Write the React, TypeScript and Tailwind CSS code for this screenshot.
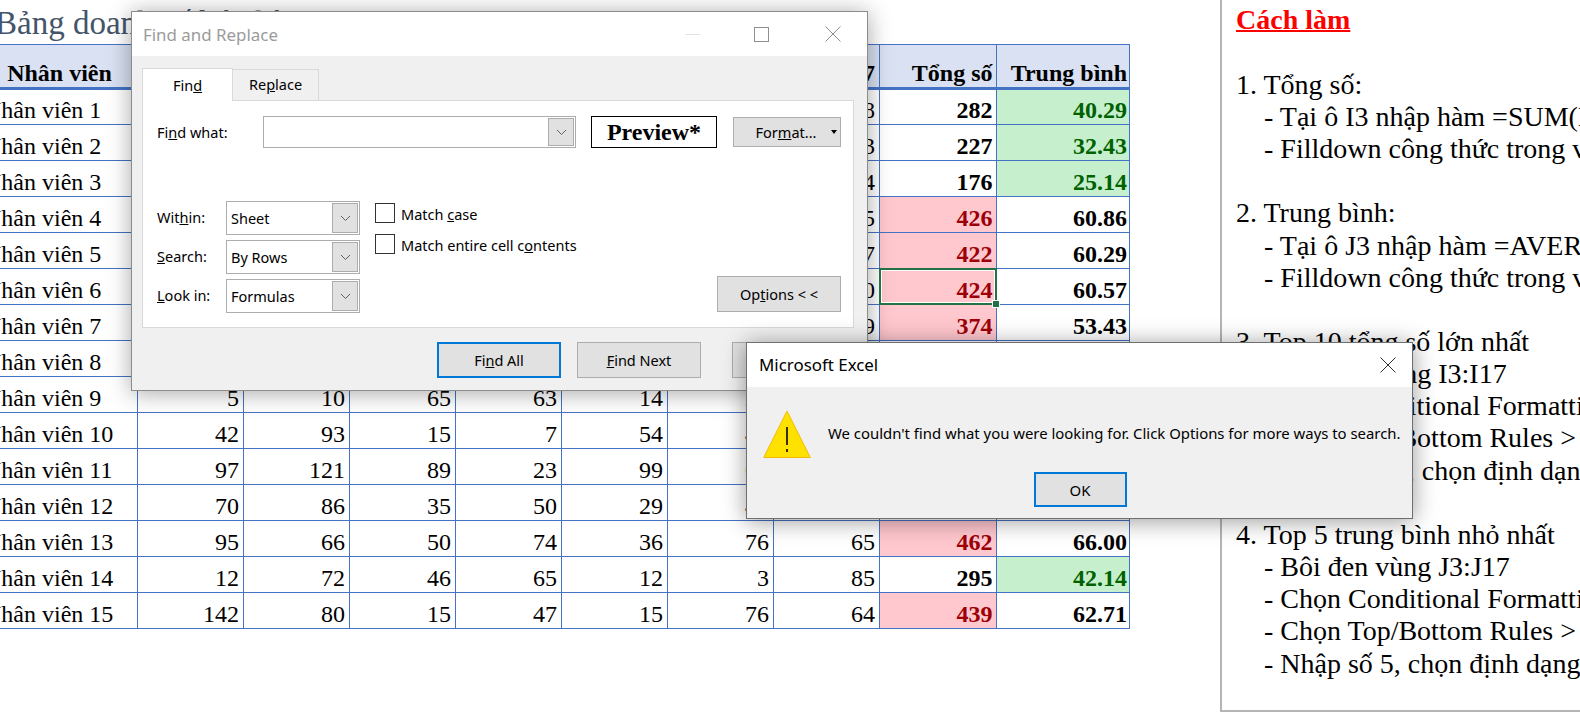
const sans = "font-['Noto_Sans',sans-serif]";

type Cell = { v: string; tone?: "red" | "green" };
const rows: { n: number; d: number[]; t: Cell; a: Cell }[] = [
  { n: 1, d: [40, 40, 40, 40, 40, 34, 48], t: { v: "282" }, a: { v: "40.29", tone: "green" } },
  { n: 2, d: [30, 30, 30, 30, 34, 40, 33], t: { v: "227" }, a: { v: "32.43", tone: "green" } },
  { n: 3, d: [20, 20, 30, 30, 30, 22, 24], t: { v: "176" }, a: { v: "25.14", tone: "green" } },
  { n: 4, d: [60, 60, 60, 60, 60, 61, 65], t: { v: "426", tone: "red" }, a: { v: "60.86" } },
  { n: 5, d: [60, 60, 60, 60, 60, 65, 57], t: { v: "422", tone: "red" }, a: { v: "60.29" } },
  { n: 6, d: [60, 60, 60, 60, 60, 64, 60], t: { v: "424", tone: "red" }, a: { v: "60.57" } },
  { n: 7, d: [50, 50, 50, 50, 50, 55, 69], t: { v: "374", tone: "red" }, a: { v: "53.43" } },
  { n: 8, d: [40, 40, 40, 40, 40, 40, 40], t: { v: "280" }, a: { v: "40.00" } },
  { n: 9, d: [5, 10, 65, 63, 14, 20, 30], t: { v: "207" }, a: { v: "29.57" } },
  { n: 10, d: [42, 93, 15, 7, 54, 40, 50], t: { v: "301" }, a: { v: "43.00" } },
  { n: 11, d: [97, 121, 89, 23, 99, 60, 70], t: { v: "559" }, a: { v: "79.86" } },
  { n: 12, d: [70, 86, 35, 50, 29, 40, 40], t: { v: "350" }, a: { v: "50.00" } },
  { n: 13, d: [95, 66, 50, 74, 36, 76, 65], t: { v: "462", tone: "red" }, a: { v: "66.00" } },
  { n: 14, d: [12, 72, 46, 65, 12, 3, 85], t: { v: "295" }, a: { v: "42.14", tone: "green" } },
  { n: 15, d: [142, 80, 15, 47, 15, 76, 64], t: { v: "439", tone: "red" }, a: { v: "62.71" } },
];

const toneClass = (tone?: "red" | "green") =>
  tone === "red"
    ? "bg-[#ffc7ce] text-[#9c0006]"
    : tone === "green"
      ? "bg-[#c6efce] text-[#006100]"
      : "bg-white text-black";

function Sheet() {
  return (
    <div className="w-[1129px] shrink-0 font-['Liberation_Serif',serif] text-black">
      <div className="h-[44px] -ml-[5px] whitespace-nowrap text-[33px] leading-[46px] text-[#44546a]">
        Bảng doanh số bán hàng
      </div>
      <table className="-ml-[19px] w-[1148.5px] table-fixed border-collapse text-[24px]">
        <colgroup>
          <col className="w-[156px]" />
          {[0, 1, 2, 3, 4, 5, 6].map((i) => (
            <col key={i} className="w-[106px]" />
          ))}
          <col className="w-[116.5px]" />
          <col className="w-[133.5px]" />
        </colgroup>
        <thead>
          <tr className="h-[44px] bg-[#d9e1f2] font-bold">
            <th className="border border-b-[3px] border-[#4472c4] text-center align-bottom leading-[28px]">Nhân viên</th>
            {[1, 2, 3, 4, 5, 6, 7].map((i) => (
              <th key={i} className="border border-b-[3px] border-[#4472c4] px-[4px] text-right align-bottom leading-[28px]">
                Ngày {i}
              </th>
            ))}
            <th className="border border-b-[3px] border-[#4472c4] pl-[4px] pr-[3px] text-right align-bottom leading-[28px]">Tổng số</th>
            <th className="border border-b-[3px] border-[#4472c4] pl-[4px] pr-[2px] text-right align-bottom leading-[28px]">Trung bình</th>
          </tr>
        </thead>
        <tbody>
          {rows.map((r) => (
            <tr key={r.n} className="h-[36px]">
              <td className="whitespace-nowrap border border-[#4472c4] px-[2px] align-bottom leading-[28px]">Nhân viên {r.n}</td>
              {r.d.map((v, i) => (
                <td key={i} className="border border-[#4472c4] px-[4px] text-right align-bottom leading-[28px]">
                  {v}
                </td>
              ))}
              <td className={`relative border border-[#4472c4] pl-[4px] pr-[3px] text-right align-bottom font-bold leading-[28px] ${toneClass(r.t.tone)}`}>
                {r.t.v}
                {r.n === 6 && (
                  <>
                    <span className="absolute -inset-[1px] z-10 border-2 border-[#217346] shadow-[inset_0_0_0_1px_#ffffff]" />
                    <span className="absolute -bottom-[4px] -right-[4px] z-10 h-[8px] w-[8px] border border-white bg-[#217346]" />
                  </>
                )}
              </td>
              <td className={`border border-[#4472c4] pl-[4px] pr-[2px] text-right align-bottom font-bold leading-[28px] ${toneClass(r.a.tone)}`}>
                {r.a.v}
              </td>
            </tr>
          ))}
        </tbody>
      </table>
    </div>
  );
}

const notes: { text: string; indent?: boolean }[] = [
  { text: "1. Tổng số:" },
  { text: "- Tại ô I3 nhập hàm =SUM(D3:H3)", indent: true },
  { text: "- Filldown công thức trong vùng I3:I17", indent: true },
  { text: "\u00a0" },
  { text: "2. Trung bình:" },
  { text: "- Tại ô J3 nhập hàm =AVERAGE(D3:H3)", indent: true },
  { text: "- Filldown công thức trong vùng J3:J17", indent: true },
  { text: "\u00a0" },
  { text: "3. Top 10 tổng số lớn nhất" },
  { text: "- Bôi đen vùng I3:I17", indent: true },
  { text: "- Chọn Conditional Formatting", indent: true },
  { text: "- Chọn Top/Bottom Rules > Top 10", indent: true },
  { text: "- Nhập số 10, chọn định dạng", indent: true },
  { text: "\u00a0" },
  { text: "4. Top 5 trung bình nhỏ nhất" },
  { text: "- Bôi đen vùng J3:J17", indent: true },
  { text: "- Chọn Conditional Formatting", indent: true },
  { text: "- Chọn Top/Bottom Rules > Bottom", indent: true },
  { text: "- Nhập số 5, chọn định dạng", indent: true },
];

function Notes() {
  return (
    <div className="ml-[91px] h-[712px] w-[400px] shrink-0 border-b-[2px] border-l-[2px] border-[#b5b5b5] pl-[14px] font-['Liberation_Serif',serif] text-[28px] leading-[32.15px] text-black whitespace-nowrap">
      <div className="pt-[4px] font-bold text-[#ff0000] underline decoration-[2px]">Cách làm</div>
      <div className="h-[32.6px]" />
      {notes.map((l, i) => (
        <div key={i} className={l.indent ? "pl-[28px]" : ""}>
          {l.text}
        </div>
      ))}
    </div>
  );
}

function Chevron() {
  return (
    <span className="flex h-full w-[26px] shrink-0 items-center justify-center border border-[#adadad] bg-[#e1e1e1]">
      <svg width="11" height="7" viewBox="0 0 11 7" fill="none" stroke="#606060" strokeWidth="1">
        <path d="M1 1l4.5 4.5L10 1" />
      </svg>
    </span>
  );
}

function Combo({ label, value }: { label: React.ReactNode; value: string }) {
  return (
    <div className="flex items-center">
      <div className="w-[69px] shrink-0">{label}</div>
      <div className="flex h-[34px] w-[134px] items-center border border-[#adadad] bg-white p-[1px] pl-[4px]">
        <span className="grow pt-[1px]">{value}</span>
        <Chevron />
      </div>
    </div>
  );
}

function Btn({ children, focus, className }: { children: React.ReactNode; focus?: boolean; className: string }) {
  return (
    <div
      className={`flex items-center justify-center bg-[#e1e1e1] pt-[1px] ${
        focus ? "border-2 border-[#0078d7]" : "border border-[#adadad]"
      } ${className}`}
    >
      <span>{children}</span>
    </div>
  );
}

function Check({ children }: { children: React.ReactNode }) {
  return (
    <div className="flex items-center gap-[6px]">
      <span className="h-[20px] w-[20px] border border-[#333333] bg-white" />
      <span className="pt-[2px] leading-[20px]">{children}</span>
    </div>
  );
}

function U({ children }: { children: React.ReactNode }) {
  return <span className="underline">{children}</span>;
}

function FindDialog() {
  return (
    <div className={`absolute left-[131px] top-[11px] h-[380px] w-[737px] border border-[#8c8c8c] bg-[#f0f0f0] text-[14.5px] text-black shadow-[0_2px_22px_rgba(0,0,0,0.35)] ${sans}`}>
      <div className="flex h-[44px] items-center bg-white pl-[11px] pr-[26px]">
        <span className="grow pt-[1px] text-[16.9px] text-[#9b9b9b]">Find and Replace</span>
        <span className="mr-[54px] h-px w-[15px] bg-[#e3e3e3]" />
        <span className="mr-[56px] h-[15px] w-[15px] border border-[#8f8f8f]" />
        <svg width="16" height="16" viewBox="0 0 16 16" stroke="#8f8f8f" strokeWidth="1" fill="none">
          <path d="M0.5 0.5l15 15M15.5 0.5l-15 15" />
        </svg>
      </div>
      <div className="flex h-[44px] items-end pl-[10px]">
        <div className="-mb-px z-10 flex h-[33px] w-[91px] items-center justify-center border border-b-0 border-[#d9d9d9] bg-white pt-[1px]">
          <span>Fin<U>d</U></span>
        </div>
        <div className="flex h-[31px] w-[86px] items-center justify-center border border-b-0 border-l-0 border-[#d9d9d9] bg-[#f0f0f0]">
          <span>Re<U>p</U>lace</span>
        </div>
      </div>
      <div className="ml-[10px] mr-[13px] h-[228px] border border-[#d9d9d9] bg-white pl-[14px] pr-[12px]">
        <div className="flex h-[47px] items-end">
          <div className="w-[106px] shrink-0 pb-[4px]">
            Fi<U>n</U>d what:
          </div>
          <div className="flex h-[32px] w-[313px] shrink-0 items-center justify-end border border-[#adadad] bg-white p-[1px]">
            <Chevron />
          </div>
          <div className="ml-[15px] flex h-[32px] w-[126px] shrink-0 items-center justify-center border border-black font-['Liberation_Serif',serif] text-[24px] font-bold">
            Preview*
          </div>
          <Btn className="relative mb-px ml-[16px] h-[30px] w-[108px] shrink-0 pr-[2px]">
            For<U>m</U>at...
            <span className="absolute right-[3px] top-[12px] h-0 w-0 border-x-[3px] border-t-[4px] border-x-transparent border-t-black" />
          </Btn>
        </div>
        <div className="mt-[53px] flex">
          <div className="flex flex-col gap-[5px]">
            <Combo label={<>Wit<U>h</U>in:</>} value="Sheet" />
            <Combo label={<><U>S</U>earch:</>} value="By Rows" />
            <Combo label={<><U>L</U>ook in:</>} value="Formulas" />
          </div>
          <div className="ml-[15px] flex flex-col gap-[9px] pt-[1px]">
            <Check>Match <U>c</U>ase</Check>
            <Check>Match entire cell c<U>o</U>ntents</Check>
          </div>
          <div className="ml-auto flex items-end pb-[1px]">
            <Btn className="h-[36px] w-[124px]">
              Op<U>t</U>ions &lt; &lt;
            </Btn>
          </div>
        </div>
      </div>
      <div className="mt-[14px] flex gap-[16px] pl-[305px]">
        <Btn focus className="h-[36px] w-[124px]">
          Fi<U>n</U>d All
        </Btn>
        <Btn className="h-[36px] w-[124px]">
          <U>F</U>ind Next
        </Btn>
        <Btn className="ml-[15px] h-[36px] w-[124px]">Close</Btn>
      </div>
    </div>
  );
}

function ExcelDialog() {
  return (
    <div className={`absolute left-[746px] top-[342px] h-[177px] w-[667px] border border-[#6f6f6f] bg-[#f0f0f0] text-[14.9px] text-black shadow-[0_2px_22px_rgba(0,0,0,0.4)] ${sans}`}>
      <div className="flex h-[44px] items-center justify-between bg-white pl-[12px] pr-[16px] text-[16.9px]">
        <span>Microsoft Excel</span>
        <svg width="16" height="16" viewBox="0 0 16 16" stroke="#303030" strokeWidth="1" fill="none">
          <path d="M0.5 0.5l15 15M15.5 0.5l-15 15" />
        </svg>
      </div>
      <div className="flex h-[85px] items-center pl-[16px] pt-[8px]">
        <svg width="48" height="48" viewBox="0 0 48 48" className="mr-[17px] shrink-0">
          <path d="M24 1L47.3 47.5H0.7Z" fill="#ffe100" stroke="#f2b90c" strokeWidth="1" />
          <path d="M24 17v18" stroke="#000" strokeWidth="1.6" />
          <path d="M24 39v3" stroke="#000" strokeWidth="1.6" />
        </svg>
        <span className="whitespace-nowrap">We couldn't find what you were looking for. Click Options for more ways to search.</span>
      </div>
      <div className="flex justify-center pr-[1px]">
        <Btn focus className="ml-[2px] h-[35px] w-[93px]">
          OK
        </Btn>
      </div>
    </div>
  );
}

export default function App() {
  return (
    <div className="relative flex h-[725px] w-[1580px] overflow-hidden bg-white">
      <Sheet />
      <Notes />
      <FindDialog />
      <ExcelDialog />
    </div>
  );
}
